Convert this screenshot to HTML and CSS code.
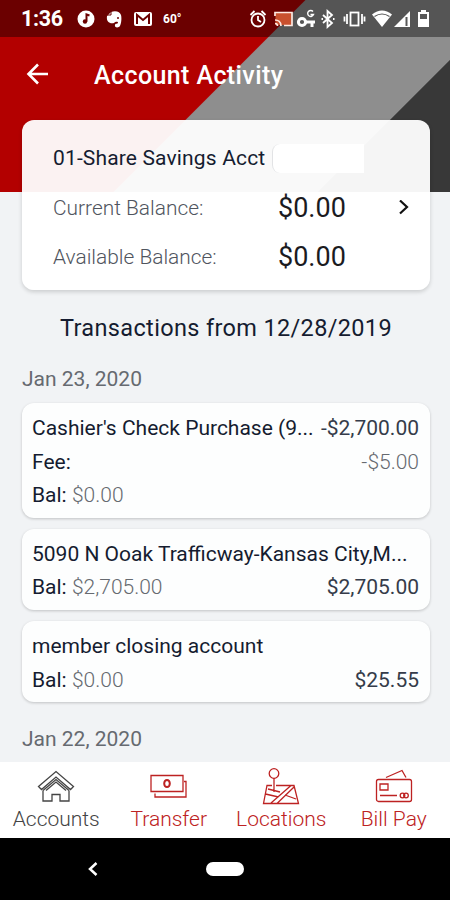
FILE: index.html
```html
<!DOCTYPE html>
<html lang="en">
<head>
    <meta charset="UTF-8">
    <meta name="viewport" content="width=device-width, initial-scale=1.0">
    <link rel="stylesheet" href="styles.css">
    <title>Account Activity</title>
</head>
<body>
    <div class="screen">
        <div class="status-bar">
            <span class="clock">1:36</span>
            <svg class="notifications" width="80" height="20" viewBox="0 0 80 20">
                <circle cx="9" cy="10" r="8.5" fill="#fff"/>
                <path d="M9.5 12.5V5.5l3 1" fill="none" stroke="#6b0000" stroke-width="2"/>
                <circle cx="8" cy="12.5" r="2.2" fill="#6b0000"/>
                <path d="M30 7l4-4c5-2 9 0 10 3 1 4 0 9-1 11-1 2-6 2-5-1 0-2 3-1 3-2 0-2-3-1-4 0-4 1-8-1-7-7z" fill="#fff"/>
                <path d="M30 6h4V2" fill="none" stroke="#6b0000" stroke-width="1"/>
                <circle cx="41" cy="9" r="1" fill="#6b0000"/>
                <rect x="57" y="3" width="18" height="14" rx="2" fill="#fff"/>
                <path d="M60 15V6l6 5 6-5v9" fill="none" stroke="#6b0000" stroke-width="2"/>
            </svg>
            <span class="temp">60°</span>
            <svg class="system" width="184" height="22" viewBox="0 0 184 22">
                <g fill="none" stroke="#fff" stroke-width="1.8">
                    <circle cx="9" cy="12" r="6.5"/>
                    <path d="M9 8v4l3 2M1.5 7l4-4M16.5 7l-4-4"/>
                </g>
                <rect x="26.5" y="5" width="16" height="12" fill="#c8502e"/>
                <path d="M26 8V4.5h17v13h-8M26 12c3 0 6 2 6 6M26 15.5c1.5 0 2.5 1 2.5 2.5" fill="none" stroke="#ffe9e2" stroke-width="1.7"/>
                <circle cx="53" cy="14" r="3.6" fill="none" stroke="#fff" stroke-width="3"/>
                <path d="M57 14h9M63 14v5" stroke="#fff" stroke-width="3"/>
                <path d="M64 3.5a3 3 0 1 0 .5 3h-3" fill="none" stroke="#fff" stroke-width="1.4"/>
                <path d="M74 7l9 8-4.5 4V3l4.5 4-9 8" fill="none" stroke="#fff" stroke-width="1.8"/>
                <path d="M72.5 11h1.5M84 11h1.5" stroke="#fff" stroke-width="2"/>
                <g fill="none" stroke="#fff" stroke-width="1.8">
                    <rect x="101.5" y="4.5" width="8" height="13"/>
                    <path d="M98 6v10M113 6v10M95.5 8.5v5M115.5 8.5v5"/>
                </g>
                <path d="M123 6.5q10-8 20 0L133 19z" fill="#fff"/>
                <path d="M125.5 8.5q7.5-5 15 0" fill="none" stroke="#585858" stroke-width="1.2"/>
                <path d="M145 19L161 3v16z" fill="#fff"/>
                <path d="M157.5 9v9" stroke="#585858" stroke-width="2"/>
                <path d="M169 4h3V2h5v2h3v15h-11z" fill="#fff"/>
                <path d="M171 6h7v5h-7z" fill="#585858"/>
            </svg>
        </div>

        <div class="app-bar">
            <svg width="24" height="22" viewBox="0 0 24 22" fill="none" stroke="#fff" stroke-width="2.6">
                <path d="M22 11H3M12 1.5L2.5 11l9.5 9.5"/>
            </svg>
            <h1>Account Activity</h1>
        </div>

        <div class="account-card">
            <div class="account-name">01-Share Savings Acct <span class="masked"></span></div>
            <div class="balance">
                <span class="label">Current Balance:</span>
                <span class="value">$0.00</span>
                <svg width="12" height="16" viewBox="0 0 12 16" fill="none" stroke="#111" stroke-width="2.2">
                    <path d="M2 .5L9 7l-7 6.5"/>
                </svg>
            </div>
            <div class="balance">
                <span class="label">Available Balance:</span>
                <span class="value">$0.00</span>
            </div>
        </div>

        <div class="transactions">
            <h2>Transactions from 12/28/2019</h2>
            <div class="date">Jan 23, 2020</div>
            <div class="card">
                <div class="row"><span class="name">Cashier's Check Purchase (9...</span><span class="amount">-$2,700.00</span></div>
                <div class="row"><span class="name">Fee:</span><span class="muted">-$5.00</span></div>
                <div class="row"><span class="name">Bal: <span class="muted">$0.00</span></span></div>
            </div>
            <div class="card">
                <div class="row"><span class="name">5090 N Ooak Trafficway-Kansas City,M...</span></div>
                <div class="row"><span class="name">Bal: <span class="muted">$2,705.00</span></span><span class="amount">$2,705.00</span></div>
            </div>
            <div class="card">
                <div class="row"><span class="name">member closing account</span></div>
                <div class="row"><span class="name">Bal: <span class="muted">$0.00</span></span><span class="amount">$25.55</span></div>
            </div>
            <div class="date last">Jan 22, 2020</div>
        </div>

        <div class="tabs">
            <div class="tab active">
                <svg width="38" height="38" viewBox="0 0 38 38">
                    <path d="M1.5 18.5L19 3.5l17.500 15-3 3L19 9 4.5 21.500zM6 22.500v10.500h9v-6.500h8V33h9V22.500M6 22.500L19 11.500l13 11M9 22.500L19 14l10 8.500"/>
                </svg>
                <span>Accounts</span>
            </div>
            <div class="tab">
                <svg width="38" height="38" viewBox="0 0 38 38">
                    <path d="M1 7.5h32v16H1zM5 25.5V29h31V13.500h-2"/>
                    <ellipse cx="17" cy="15.5" rx="2.8" ry="3.6" stroke-width="2"/>
                </svg>
                <span>Transfer</span>
            </div>
            <div class="tab">
                <svg width="38" height="38" viewBox="0 0 38 38">
                    <circle cx="12" cy="5.5" r="4.8"/>
                    <path d="M12 10v14M10 17.5H5l-3.5 18h35L32 17.500H14M3.500 26l13 3M18 24l-12-3M9 35L29 17.500M15 35.500L32 19M23 27l11 4"/>
                </svg>
                <span>Locations</span>
            </div>
            <div class="tab">
                <svg width="38" height="38" viewBox="0 0 38 38">
                    <rect x="1.5" y="11.5" width="35" height="22" rx="2"/>
                    <path d="M11 9.5l16-7 4 7M5 16h8v6H5zM5 27.500h17"/>
                    <circle cx="27.5" cy="27.5" r="2.3"/>
                    <circle cx="31" cy="27.5" r="2.3"/>
                </svg>
                <span>Bill Pay</span>
            </div>
        </div>

        <div class="system-nav">
            <svg width="12" height="16" viewBox="0 0 12 16" fill="none" stroke="#fff" stroke-width="2.5">
                <path d="M9.5 2L3 8l6.500 6"/>
            </svg>
            <div class="home-pill"></div>
        </div>
    </div>
</body>
</html>
```
FILE: styles.css
```css
* {
    box-sizing: border-box;
}

body {
    margin: 0;
    font-family: Roboto, sans-serif;
    color: #151c30;
}

h1, h2 {
    margin: 0;
    font-weight: 500;
}

.screen {
    display: flex;
    flex-direction: column;
    width: 450px;
    height: 900px;
    overflow: hidden;
    background: linear-gradient(135deg, #b30000 215.5px, #8e8e8e 216.5px, #8e8e8e 360px, #383838 361px) 0 0 / 450px 192px no-repeat #f1f3f5;
}

.status-bar {
    display: flex;
    align-items: center;
    flex: none;
    height: 37px;
    padding-left: 21px;
    background: rgba(0, 0, 0, 0.4);
    color: #fff;
}

.clock {
    width: 56px;
    font-size: 21.5px;
    font-weight: 700;
    letter-spacing: -0.3px;
}

.temp {
    margin-left: 6px;
    width: 30px;
    font-size: 12px;
    font-weight: 700;
}

.system {
    margin-left: 56px;
}

.app-bar {
    display: flex;
    align-items: center;
    flex: none;
    height: 75px;
    padding: 0 0 1px 26px;
    color: #fff;
}

.app-bar h1 {
    margin-left: 44px;
    padding-top: 3px;
    font-size: 25px;
    letter-spacing: 0.4px;
}

.account-card {
    flex: none;
    height: 170px;
    margin: 8px 20px 0 22px;
    padding: 14px 20px 0 31px;
    border-radius: 12px;
    background: rgba(255, 255, 255, 0.95);
    box-shadow: 0 2px 4px rgba(0, 0, 0, 0.16);
}

.account-name {
    display: flex;
    align-items: center;
    height: 49px;
    gap: 7px;
    padding-bottom: 1px;
    font-size: 21px;
    letter-spacing: 0.15px;
}

.masked {
    width: 92px;
    height: 29px;
    border-left: 1px solid #e2e3e5;
    border-radius: 8px 0 0 8px;
    background: #fff;
}

.balance {
    display: flex;
    align-items: center;
    height: 49px;
}

.label {
    width: 225px;
    font-size: 20.9px;
    font-weight: 300;
    color: #50555e;
}

.value {
    width: 120px;
    font-size: 27px;
    color: #1b1b1f;
}

.transactions {
    flex: none;
    height: 472px;
    padding: 22px 20px 0 22px;
}

h2 {
    font-size: 23.5px;
    font-weight: 400;
    line-height: 32px;
    text-align: center;
    letter-spacing: 0.35px;
}

.date {
    height: 59px;
    padding-top: 21px;
    font-size: 21px;
    line-height: 28px;
    color: #666a70;
}

.date.last {
    padding-top: 12px;
}

.card {
    margin-bottom: 11px;
    padding: 7px 11px 7px 10px;
    border-radius: 12px;
    background: #fdfefe;
    box-shadow: 0 1px 3px rgba(0, 0, 0, 0.2);
}

.row {
    display: flex;
    justify-content: space-between;
    height: 33.6px;
    font-size: 21px;
    line-height: 36px;
    white-space: nowrap;
}

.amount {
    color: #353c4a;
}

.muted {
    font-weight: 300;
    color: #666a70;
}

.tabs {
    display: grid;
    grid-template-columns: repeat(4, 1fr);
    flex: none;
    height: 76px;
    padding-top: 6px;
    background: #fff;
}

.tab {
    display: flex;
    flex-direction: column;
    align-items: center;
    font-size: 21px;
    font-weight: 300;
    line-height: 27px;
    color: #bd2222;
}

.tab.active {
    color: #444;
}

.tab svg {
    fill: none;
    stroke: currentColor;
    stroke-width: 1.3;
}

.system-nav {
    display: flex;
    align-items: center;
    flex: 1;
    gap: 107px;
    padding-left: 87px;
    background: #000;
}

.home-pill {
    width: 38px;
    height: 14px;
    border-radius: 7px;
    background: #fff;
}
```
